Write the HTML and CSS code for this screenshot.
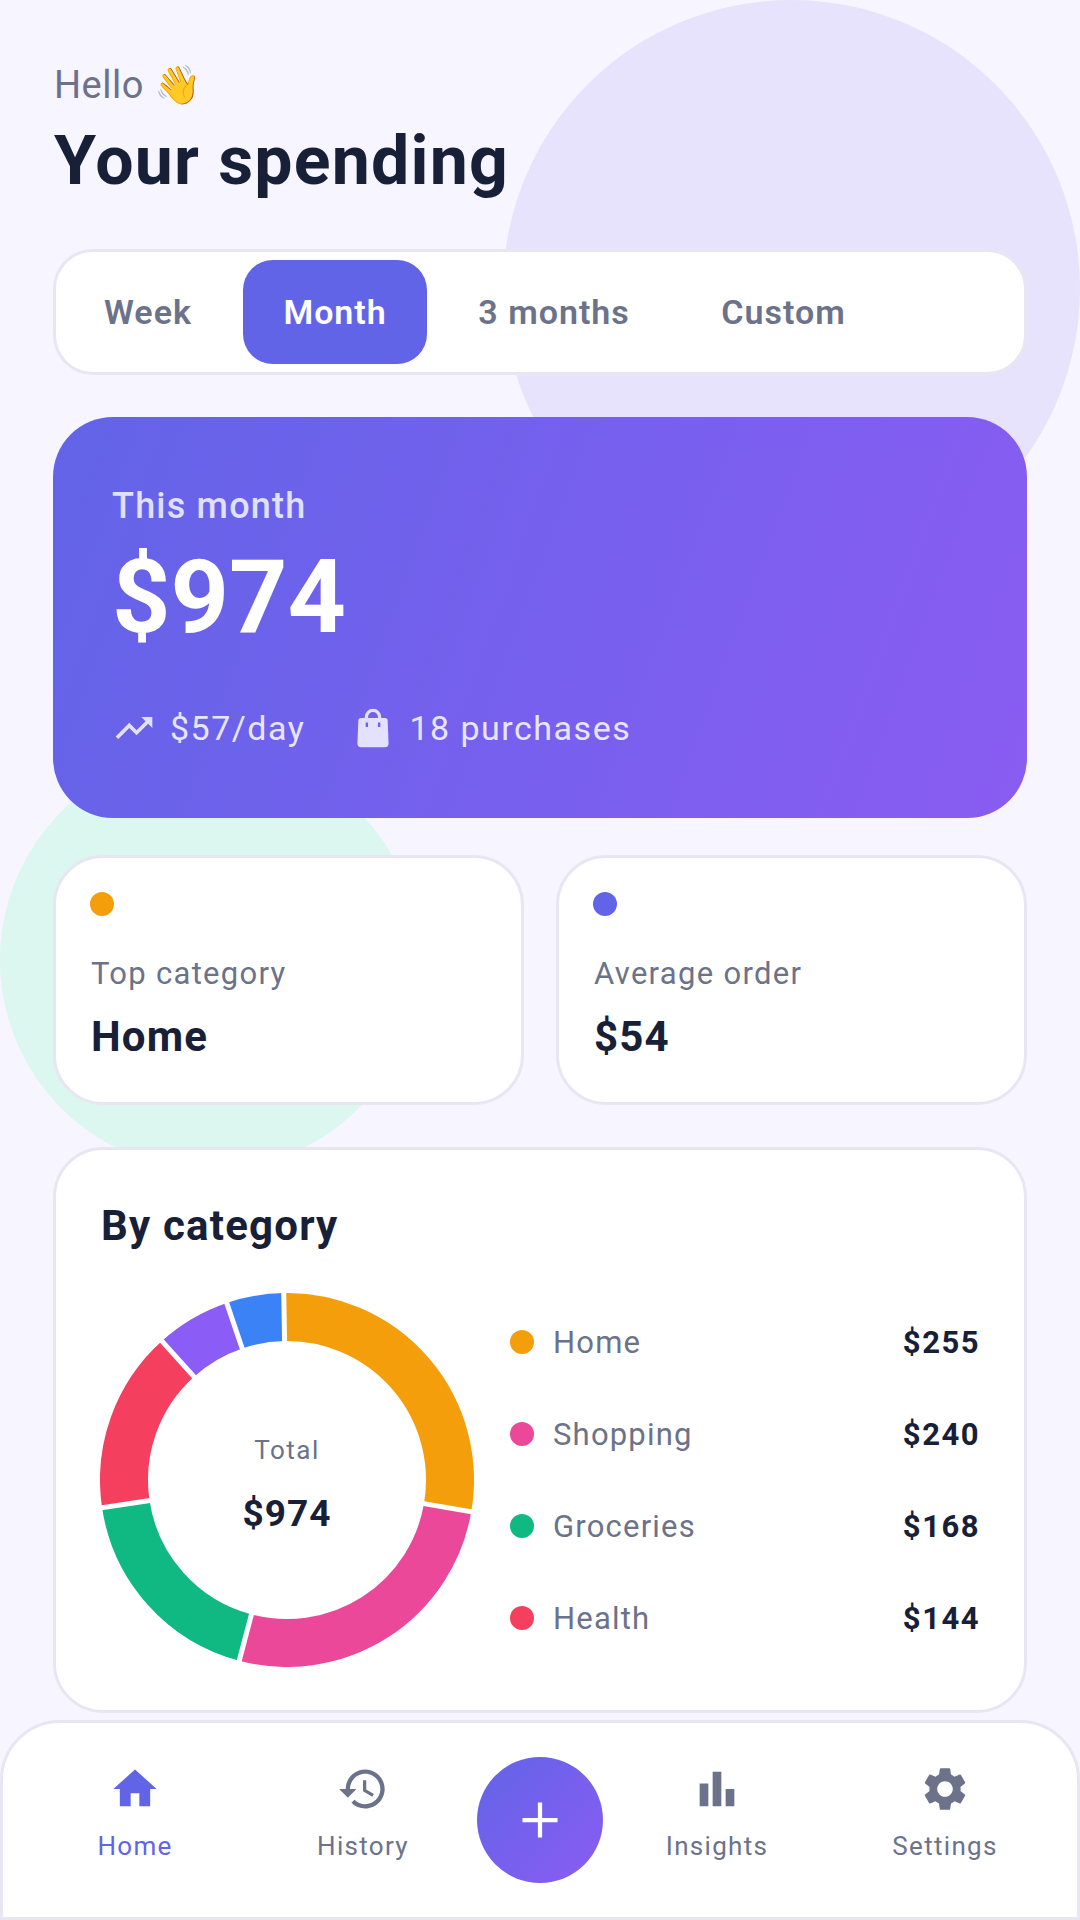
FILE: index.html
```html
<!DOCTYPE html>
<html lang="en">
<head>
  <meta charset="UTF-8">
  <meta name="viewport" content="width=device-width, initial-scale=1.0">
  <title>Your spending</title>
  <link rel="stylesheet" href="styles.css">
</head>
<body>
  <div class="blob blob-purple"></div>
  <div class="blob blob-green"></div>

  <main class="content">
    <header class="top">
      <p class="hello">Hello 👋</p>
      <h1>Your spending</h1>
    </header>

    <nav class="tabs">
      <span class="tab">Week</span>
      <span class="tab active">Month</span>
      <span class="tab">3 months</span>
      <span class="tab">Custom</span>
    </nav>

    <section class="hero">
      <p class="hero-label">This month</p>
      <p class="hero-amount">$974</p>
      <div class="hero-meta">
        <span class="meta-item">
          <svg class="meta-icon" viewBox="0 0 24 24"><path d="M16 6l2.29 2.29-4.88 4.88-4-4L2 16.59 3.41 18l6-6 4 4 6.3-6.29L22 12V6z"/></svg>
          $57/day
        </span>
        <span class="meta-item">
          <svg class="meta-icon" viewBox="0 0 24 24"><path fill-rule="evenodd" d="M12 1.500a4.500 4.500 0 0 0-4.500 4.500v.5H5.500A1.500 1.500 0 0 0 4 8l-.5 12.500A2 2 0 0 0 5.500 22.500h13a2 2 0 0 0 2-2L20 8a1.500 1.500 0 0 0-1.500-1.500h-2V6A4.500 4.500 0 0 0 12 1.500zm-2.700 5V6a2.700 2.700 0 0 1 5.400 0v.5zM8 9h1.300v2.500H8zm6.700 0H16v2.500h-1.300z"/></svg>
          18 purchases
        </span>
      </div>
    </section>

    <div class="stats">
      <div class="stat">
        <span class="dot dot-orange"></span>
        <p class="stat-label">Top category</p>
        <p class="stat-value">Home</p>
      </div>
      <div class="stat">
        <span class="dot dot-indigo"></span>
        <p class="stat-label">Average order</p>
        <p class="stat-value">$54</p>
      </div>
    </div>

    <section class="category">
      <h2>By category</h2>
      <div class="category-body">
        <div class="donut">
          <svg viewBox="-187 -187 374 374" width="374" height="374">
            <g fill="none" stroke-width="48">
              <path stroke="#f59e0b" d="M-2.84 -162.98A163 163 0 0 1 160.62 27.74"/>
              <path stroke="#ec4899" d="M160.62 27.74A163 163 0 0 1 -41.64 157.59"/>
              <path stroke="#10b981" d="M-41.64 157.59A163 163 0 0 1 -161.21 24.09"/>
              <path stroke="#f43f5e" d="M-161.21 24.09A163 163 0 0 1 -109.07 -121.13"/>
              <path stroke="#8b5cf6" d="M-109.07 -121.13A163 163 0 0 1 -52.53 -154.30"/>
              <path stroke="#3b82f6" d="M-52.53 -154.30A163 163 0 0 1 -2.84 -162.98"/>
            </g>
            <g stroke="#fff" stroke-width="5">
              <line y1="-130" y2="-195" transform="rotate(-1)"/>
              <line y1="-130" y2="-195" transform="rotate(99.8)"/>
              <line y1="-130" y2="-195" transform="rotate(194.8)"/>
              <line y1="-130" y2="-195" transform="rotate(261.5)"/>
              <line y1="-130" y2="-195" transform="rotate(318)"/>
              <line y1="-130" y2="-195" transform="rotate(341.2)"/>
            </g>
          </svg>
          <div class="donut-center">
            <span class="donut-label">Total</span>
            <span class="donut-value">$974</span>
          </div>
        </div>
        <ul class="legend">
          <li><span class="dot dot-orange"></span><span class="legend-name">Home</span><b>$255</b></li>
          <li><span class="dot dot-pink"></span><span class="legend-name">Shopping</span><b>$240</b></li>
          <li><span class="dot dot-green"></span><span class="legend-name">Groceries</span><b>$168</b></li>
          <li><span class="dot dot-red"></span><span class="legend-name">Health</span><b>$144</b></li>
        </ul>
      </div>
    </section>
  </main>

  <footer class="bottom-nav">
    <a class="nav-item current">
      <svg viewBox="0 0 24 24"><path d="M10 20v-6h4v6h5v-8h3L12 3 2 12h3v8z"/></svg>
      Home
    </a>
    <a class="nav-item">
      <svg viewBox="0 0 24 24"><path d="M13 3c-4.970 0-9 4.030-9 9H1l3.890 3.890.07.14L9 12H6c0-3.870 3.130-7 7-7s7 3.130 7 7-3.130 7-7 7c-1.930 0-3.680-.79-4.940-2.060l-1.420 1.420C8.270 19.990 10.510 21 13 21c4.970 0 9-4.030 9-9s-4.030-9-9-9zm-1 5v5l4.280 2.540.72-1.210-3.500-2.080V8H12z"/></svg>
      History
    </a>
    <button class="fab" type="button">
      <svg viewBox="0 0 24 24"><path d="M11.150 5h1.700v6.150H19v1.700h-6.150V19h-1.700v-6.150H5v-1.700h6.150z"/></svg>
    </button>
    <a class="nav-item">
      <svg viewBox="0 0 24 24"><path d="M4 9.500h4V20H4zM10 4h4v16h-4zm6 8h4v8h-4z"/></svg>
      Insights
    </a>
    <a class="nav-item">
      <svg viewBox="0 0 24 24"><path d="M19.140 12.940c.04-.3.06-.61.06-.94 0-.32-.02-.64-.07-.94l2.030-1.580c.18-.14.23-.41.12-.61l-1.920-3.320c-.12-.22-.37-.29-.59-.22l-2.390.96c-.5-.38-1.030-.7-1.620-.94l-.36-2.540c-.04-.24-.24-.41-.48-.41h-3.840c-.24 0-.43.17-.47.41l-.36 2.540c-.59.24-1.130.57-1.620.94l-2.390-.96c-.22-.08-.47 0-.59.22L2.740 8.870c-.12.21-.08.47.12.61l2.030 1.580c-.05.3-.09.63-.09.94s.02.64.07.94l-2.030 1.580c-.18.14-.23.41-.12.61l1.920 3.320c.12.22.37.29.59.22l2.390-.96c.5.38 1.030.7 1.620.94l.36 2.540c.05.24.24.41.48.41h3.840c.24 0 .44-.17.47-.41l.36-2.540c.59-.24 1.130-.56 1.620-.94l2.390.96c.22.08.47 0 .59-.22l1.920-3.320c.12-.22.07-.47-.12-.61l-2.010-1.580zM12 15.600c-1.980 0-3.600-1.620-3.600-3.600s1.620-3.600 3.600-3.600 3.600 1.620 3.600 3.600-1.620 3.600-3.600 3.600z"/></svg>
      Settings
    </a>
  </footer>
</body>
</html>
```

FILE: styles.css
```css
* {
  box-sizing: border-box;
}
body {
  position: relative;
  display: flex;
  flex-direction: column;
  justify-content: space-between;
  width: 1080px;
  height: 1920px;
  margin: 0;
  overflow: hidden;
  background-color: #f7f5ff;
  font-family: Roboto, "Noto Sans", sans-serif;
  color: #182038;
}
p, h1, h2, ul {
  margin: 0;
  padding: 0;
}

/* fondo */
.blob {
  position: absolute;
  border-radius: 50%;
}
.blob-purple {
  top: 0;
  left: 503px;
  width: 577px;
  height: 577px;
  background-color: #e7e3fd;
}
.blob-green {
  top: 750px;
  left: 0;
  width: 420px;
  height: 420px;
  background-color: #dcf7ef;
}

.content {
  position: relative;
  padding: 61px 53px 0;
}
.top {
  padding-left: 1px;
}

.hello {
  font-size: 38px;
  line-height: 48px;
  color: #6b7289;
  letter-spacing: 0.5px;
}
h1 {
  margin-top: 12px;
  font-size: 68px;
  line-height: 80px;
  font-weight: 700;
  letter-spacing: 1.2px;
}

.tabs {
  display: flex;
  gap: 11.5px;
  margin-top: 48px;
  padding: 8px;
  background-color: #fff;
  border: 3px solid #e8e6f3;
  border-radius: 40px;
}
.tab {
  padding: 0 40px;
  font-size: 34px;
  line-height: 104px;
  font-weight: 600;
  color: #6b7289;
  border-radius: 30px;
  letter-spacing: 1px;
}
.tab.active {
  background-color: #6264e8;
  color: #fff;
}

.hero {
  margin-top: 42px;
  height: 401px;
  padding: 65px 59px 0;
  border-radius: 60px;
  background: linear-gradient(110deg, #6264e8, #8a5cf2);
  color: #fff;
}
.hero-label {
  font-size: 36px;
  line-height: 48px;
  font-weight: 500;
  color: #e0e0ff;
  letter-spacing: 1.2px;
}
.hero-amount {
  margin-top: 9px;
  font-size: 102px;
  line-height: 116px;
  font-weight: 700;
}
.hero-meta {
  display: flex;
  gap: 46px;
  margin-top: 51px;
  font-size: 34px;
  line-height: 44px;
  letter-spacing: 1.5px;
  color: #e8e6ff;
}
.meta-item {
  display: flex;
  align-items: center;
  gap: 14px;
}
.meta-icon {
  width: 44px;
  height: 44px;
  fill: #e4e0ff;
}

.stats {
  display: grid;
  grid-template-columns: 1fr 1fr;
  gap: 32px;
  margin-top: 37px;
}
.stat {
  height: 250px;
  padding: 34px 34px 0;
  background-color: #fff;
  border: 3px solid #e8e6f3;
  border-radius: 50px;
}
.dot {
  display: block;
  flex: none;
  width: 24px;
  height: 24px;
  border-radius: 50%;
}
.dot-orange { background-color: #f59e0b; }
.dot-indigo { background-color: #6264e8; }
.dot-pink { background-color: #ec4899; }
.dot-green { background-color: #10b981; }
.dot-red { background-color: #f43f5e; }
.stat-label {
  margin-top: 36px;
  padding-left: 1px;
  font-size: 31px;
  line-height: 44px;
  color: #6b7289;
  letter-spacing: 1.3px;
}
.stat-value {
  margin-top: 16px;
  padding-left: 1px;
  font-size: 42px;
  line-height: 50px;
  font-weight: 700;
  letter-spacing: 1.2px;
}

.category {
  margin-top: 42px;
  height: 566px;
  padding: 52px 44px 0;
  background-color: #fff;
  border: 3px solid #e8e6f3;
  border-radius: 50px;
}
h2 {
  padding-left: 1px;
  font-size: 42px;
  line-height: 48px;
  font-weight: 700;
  letter-spacing: 1.2px;
}
.category-body {
  display: flex;
  align-items: center;
  gap: 36px;
  margin-top: 43px;
}
.donut {
  position: relative;
  flex: none;
  width: 374px;
  height: 374px;
}
.donut svg {
  display: block;
}
.donut-center {
  position: absolute;
  inset: 0;
  display: flex;
  flex-direction: column;
  align-items: center;
  justify-content: center;
  padding-top: 7px;
}
.donut-label {
  font-size: 26px;
  line-height: 36px;
  color: #6b7289;
  letter-spacing: 1.5px;
}
.donut-value {
  margin-top: 24px;
  font-size: 37px;
  line-height: 44px;
  font-weight: 700;
  letter-spacing: 1px;
}
.legend {
  flex: 1;
  list-style: none;
}
.legend li {
  display: flex;
  align-items: center;
  height: 92px;
}
.legend-name {
  flex: 1;
  margin-left: 19px;
  font-size: 31px;
  color: #6b7289;
  letter-spacing: 1.2px;
}
.legend b {
  font-size: 31px;
  font-weight: 700;
  letter-spacing: 1.5px;
}

.bottom-nav {
  position: relative;
  display: flex;
  align-items: flex-start;
  height: 200px;
  padding: 34px 18px 0;
  background-color: #fff;
  border: 3px solid #e8e6f3;
  border-radius: 60px 60px 0 0;
}
.nav-item {
  flex: 1;
  display: flex;
  flex-direction: column;
  align-items: center;
  gap: 15px;
  padding-top: 6px;
  font-size: 26px;
  line-height: 32px;
  color: #6b7289;
  letter-spacing: 1.3px;
}
.nav-item svg {
  width: 52px;
  height: 52px;
  fill: #6b7289;
}
.nav-item.current {
  color: #6264e8;
}
.nav-item.current svg {
  fill: #6264e8;
}
.fab {
  flex: none;
  display: flex;
  align-items: center;
  justify-content: center;
  width: 126px;
  height: 126px;
  padding: 0;
  border: none;
  border-radius: 50%;
  background: linear-gradient(135deg, #6264e8, #8a5cf2);
}
.fab svg {
  width: 60px;
  height: 60px;
  fill: #fff;
}
```
